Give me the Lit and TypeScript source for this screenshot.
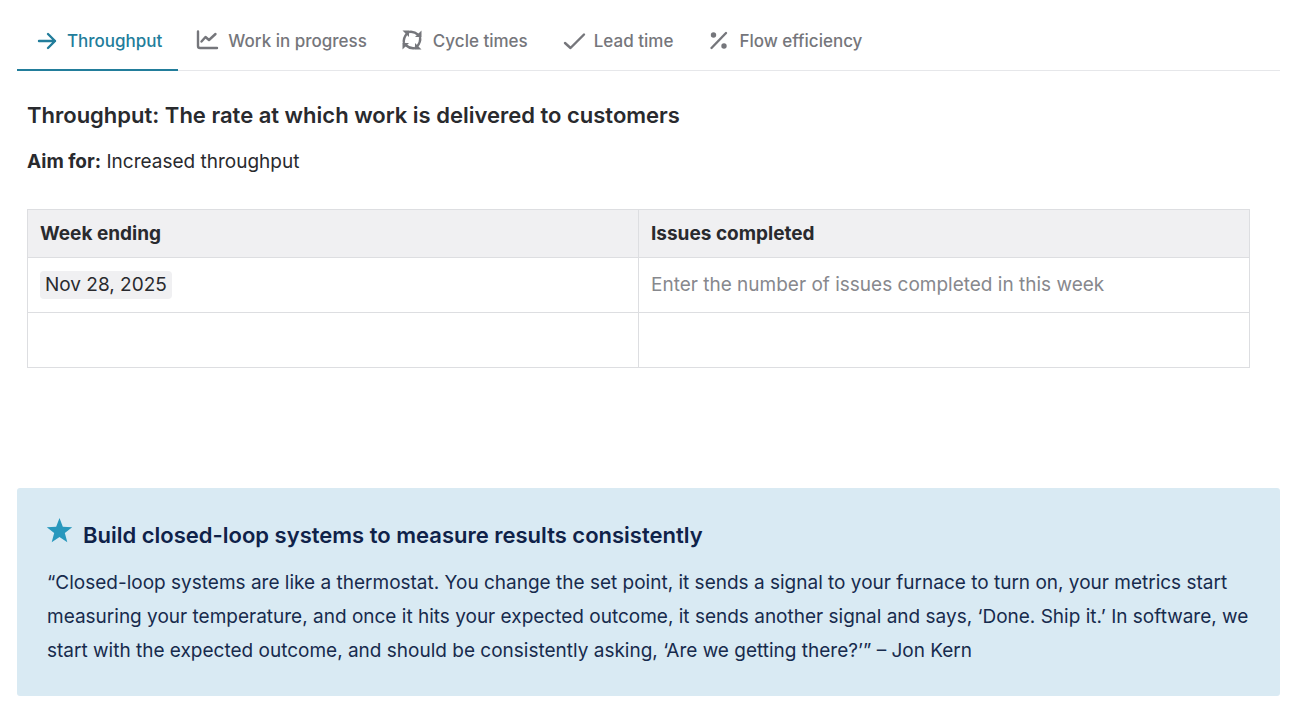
import { LitElement, html, css, svg } from "lit";
import { customElement, state } from "lit/decorators.js";

const cycleArrow = (angle: number) => svg`
  <g transform="translate(11 11) rotate(${angle})">
    <path class="arc" d="M-3 -8Q2 -9 6.500 -5"/>
    <path class="solid" d="M9.500 -9.500V-3H3Z"/>
  </g>`;

const icons = {
  arrow: svg`<path d="M4 12h16M13 5l7 7-7 7"/>`,
  chart: svg`<path d="M2 2.500v14.500q0 2 2 2h17M5.500 12.500l4-4.500 3.500 3 6.500-6"/>`,
  cycle: svg`${[0, 90, 180, 270].map(cycleArrow)}`,
  check: svg`<path d="M3 14L8.500 19L22 5.500"/>`,
  percent: svg`<path d="M4.500 19L19 4"/><circle class="solid" cx="6.500" cy="6" r="2.700"/><circle class="solid" cx="17" cy="17" r="2.700"/>`,
};

const tabs = [
  { label: "Throughput", icon: icons.arrow },
  { label: "Work in progress", icon: icons.chart },
  { label: "Cycle times", icon: icons.cycle },
  { label: "Lead time", icon: icons.check },
  { label: "Flow efficiency", icon: icons.percent },
];

@customElement("app-root")
export class AppRoot extends LitElement {
  @state() private active = 0;

  static styles = css`
    :host { display: block; box-sizing: border-box; padding: 12px 16px 19px 17px; font: 19px/34px Inter, "Liberation Sans", sans-serif; color: #292a2e; background: #fff; }
    * { box-sizing: border-box; }
    .tabs { display: flex; border-bottom: 1px solid #e6e7ea; }
    .tab { display: flex; align-items: center; gap: 8px; height: 59px; margin: 0 0 -1px; padding: 1px 16px 0 18px; border: 0; border-bottom: 2px solid transparent; background: none; color: #75767b; font: 500 17px/24px Inter, "Liberation Sans", sans-serif; white-space: nowrap; cursor: pointer; }
    .tab.active { color: #227d9b; border-color: #227d9b; }
    .icon { width: 24px; height: 24px; fill: none; stroke: currentColor; stroke-width: 2.400; stroke-linecap: round; stroke-linejoin: round; }
    .icon .solid { fill: currentColor; stroke: none; }
    .icon .arc { stroke-linecap: butt; }
    .panel { padding: 27px 30px 0 10px; }
    h2, h3, p { margin: 0; }
    h2, h3 { font-size: 22px; line-height: 34px; font-weight: 600; }
    .aim { margin-top: 13px; }
    table { width: 100%; margin-top: 30px; border-collapse: collapse; table-layout: fixed; }
    th, td { border: 1px solid #dddee1; padding: 0 12px; text-align: left; }
    th { height: 48px; background: #f0f0f2; font-weight: 700; }
    td { height: 55px; }
    .date { display: inline-block; padding: 0 5px; border-radius: 4px; background: #f0f0f2; line-height: 28px; }
    .entry { display: block; width: 100%; border: 0; padding: 0; background: none; font: inherit; color: inherit; outline: 0; }
    .entry::placeholder { color: #87888d; opacity: 1; }
    .callout { margin-top: 120px; padding: 30px 20px 28px 30px; border-radius: 3px; background: #d9eaf3; color: #172b4d; }
    .heading { display: flex; align-items: flex-start; gap: 11px; }
    .heading h3 { color: #0f2249; }
    .star { flex: none; width: 25px; height: 25px; fill: #2898bd; overflow: visible; }
    .quote { margin-top: 14px; }
  `;

  render() {
    return html`
      <nav class="tabs" role="tablist">
        ${tabs.map((tab, i) => html`<button class="tab ${i === this.active ? "active" : ""}" role="tab" aria-selected=${i === this.active} @click=${() => (this.active = i)}>
          <svg class="icon" viewBox="0 0 24 24" aria-hidden="true">${tab.icon}</svg><span>${tab.label}</span></button>`)}
      </nav>
      <main class="panel">
        <h2>Throughput: The rate at which work is delivered to customers</h2>
        <p class="aim"><b>Aim for:</b> Increased throughput</p>
        <table>
          <thead><tr><th>Week ending</th><th>Issues completed</th></tr></thead>
          <tbody>
            <tr><td><time class="date" datetime="2025-11-28">Nov 28, 2025</time></td><td><input class="entry" aria-label="Issues completed" placeholder="Enter the number of issues completed in this week"></td></tr>
            <tr><td></td><td></td></tr>
          </tbody>
        </table>
      </main>
      <aside class="callout">
        <div class="heading"><svg class="star" viewBox="0 0 24 24" aria-hidden="true"><path d="M12 0L15.200 8.400L24.200 8.800L17.100 14.500L19.500 23.200L12 18.200L4.500 23.200L6.900 14.500L-.2 8.800L8.800 8.400Z"/></svg><h3>Build closed-loop systems to measure results consistently</h3></div>
        <p class="quote">“Closed-loop systems are like a thermostat. You change the set point, it sends a signal to your furnace to turn on, your metrics start measuring your temperature, and once it hits your expected outcome, it sends another signal and says, ‘Done. Ship it.’ In software, we start with the expected outcome, and should be consistently asking, ‘Are we getting there?’” – Jon Kern</p>
      </aside>`;
  }
}
